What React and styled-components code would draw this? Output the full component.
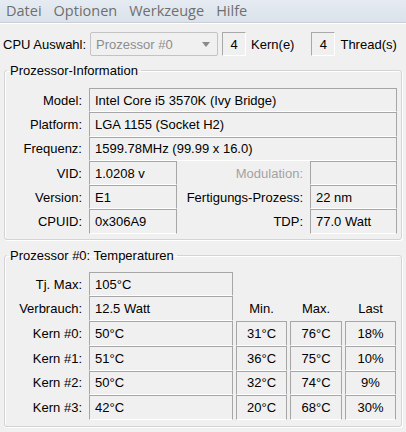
import React from 'react';
import styled, { createGlobalStyle } from 'styled-components';

const GlobalStyle = createGlobalStyle`
  html, body {
    margin: 0;
    padding: 0;
    background: #f0f0f0;
  }
  body {
    font-family: "Liberation Sans", Arial, sans-serif;
    font-size: 13px;
    color: #000;
  }
`;

const cores = [
  { name: 'Kern #0:', temp: '50°C', min: '31°C', max: '76°C', load: '18%' },
  { name: 'Kern #1:', temp: '51°C', min: '36°C', max: '75°C', load: '10%' },
  { name: 'Kern #2:', temp: '50°C', min: '32°C', max: '74°C', load: '9%' },
  { name: 'Kern #3:', temp: '42°C', min: '20°C', max: '68°C', load: '30%' },
];

function App() {
  return (
    <Window>
      <GlobalStyle />
      <MenuBar>
        <MenuItem>Datei</MenuItem>
        <MenuItem>Optionen</MenuItem>
        <MenuItem>Werkzeuge</MenuItem>
        <MenuItem>Hilfe</MenuItem>
      </MenuBar>

      <Toolbar>
        <span>CPU Auswahl:</span>
        <Combo>
          <span>Prozessor #0</span>
          <Arrow />
        </Combo>
        <CountBox>4</CountBox>
        <span>Kern(e)</span>
        <CountBox $gap>4</CountBox>
        <span>Thread(s)</span>
      </Toolbar>

      <Group>
        <Legend>Prozessor-Information</Legend>
        <InfoGrid>
          <Label>Model:</Label>
          <Field $span={3}>Intel Core i5 3570K (Ivy Bridge)</Field>
          <Label>Platform:</Label>
          <Field $span={3}>LGA 1155 (Socket H2)</Field>
          <Label>Frequenz:</Label>
          <Field $span={3}>1599.78MHz (99.99 x 16.0)</Field>

          <Label>VID:</Label>
          <Field>1.0208 v</Field>
          <Label $disabled>Modulation:</Label>
          <Field />

          <Label>Version:</Label>
          <Field>E1</Field>
          <Label>Fertigungs-Prozess:</Label>
          <Field>22 nm</Field>

          <Label>CPUID:</Label>
          <Field>0x306A9</Field>
          <Label>TDP:</Label>
          <Field>77.0 Watt</Field>
        </InfoGrid>
      </Group>

      <Group $second>
        <Legend>Prozessor #0: Temperaturen</Legend>
        <TempGrid>
          <Label>Tj. Max:</Label>
          <Field>105°C</Field>
          <Blank />

          <Label>Verbrauch:</Label>
          <Field>12.5 Watt</Field>
          <Head>Min.</Head>
          <Head>Max.</Head>
          <Head>Last</Head>

          {cores.map((c) => (
            <React.Fragment key={c.name}>
              <Label>{c.name}</Label>
              <Field>{c.temp}</Field>
              <Field $center>{c.min}</Field>
              <Field $center>{c.max}</Field>
              <Field $center>{c.load}</Field>
            </React.Fragment>
          ))}
        </TempGrid>
      </Group>
    </Window>
  );
}

export default App;

const Window = styled.div`
  width: 406px;
  height: 432px;
  overflow: hidden;
  background: #f0f0f0;
`;

const MenuBar = styled.div`
  display: flex;
  align-items: center;
  height: 22px;
  padding-left: 6px;
  gap: 12px;
  background: linear-gradient(#e6ebf2, #dbe2ea);
  border-bottom: 1px solid #c9cfd7;
  box-shadow: 0 1px 0 #ffffff;
`;

const MenuItem = styled.span`
  font-family: "Open Sans", "Liberation Sans", sans-serif;
  font-size: 14.5px;
  color: #6f6f6f;
  line-height: 20px;
`;

const Toolbar = styled.div`
  display: flex;
  align-items: center;
  height: 24px;
  margin-top: 9px;
  padding-left: 3px;
`;

const Combo = styled.div`
  display: flex;
  align-items: center;
  justify-content: space-between;
  box-sizing: border-box;
  width: 128px;
  height: 24px;
  margin-left: 4px;
  padding: 0 7px 0 5px;
  border: 1px solid #c3c3c3;
  border-radius: 2px;
  color: #8d8d8d;
  background: #f0f0f0;
`;

const Arrow = styled.span`
  width: 0;
  height: 0;
  border-left: 4.5px solid transparent;
  border-right: 4.5px solid transparent;
  border-top: 5px solid #8a8a8a;
`;

const CountBox = styled.div`
  box-sizing: border-box;
  width: 24px;
  height: 24px;
  margin-left: ${(p) => (p.$gap ? '17px' : '4px')};
  margin-right: 5px;
  display: flex;
  align-items: center;
  justify-content: center;
  border: 1px solid #a9a9a9;
  border-right-color: #ffffff;
  border-bottom-color: #ffffff;
`;

const Group = styled.fieldset`
  margin: ${(p) => (p.$second ? '8px 4px 0 4px' : '7px 4px 0 4px')};
  padding: ${(p) => (p.$second ? '9px 4px 6px 0' : '10px 4px 5px 0')};
  border: 1px solid #d3d3d3;
  border-radius: 3px;
  box-shadow: inset 1px 1px 0 #ffffff, 1px 1px 0 #ffffff;
  min-width: 0;
`;

const Legend = styled.legend`
  margin-left: 2px;
  padding: 0 3px;
  line-height: 15px;
`;

const InfoGrid = styled.div`
  display: grid;
  grid-template-columns: 81px 88px 1fr 87px;
  grid-auto-rows: 24.3px;
  column-gap: 3px;
`;

const TempGrid = styled.div`
  display: grid;
  grid-template-columns: 81px 144px 51px 52px 51px;
  grid-auto-rows: 24.7px;
  column-gap: 3px;
`;

const Label = styled.div`
  display: flex;
  align-items: center;
  justify-content: flex-end;
  padding-right: 4px;
  white-space: nowrap;
  color: ${(p) => (p.$disabled ? '#a3a3a3' : '#000')};
`;

const Field = styled.div`
  grid-column: span ${(p) => p.$span || 1};
  display: flex;
  align-items: center;
  justify-content: ${(p) => (p.$center ? 'center' : 'flex-start')};
  box-sizing: border-box;
  padding-left: ${(p) => (p.$center ? '0' : '5px')};
  border: 1px solid #a6a6a6;
  border-bottom-color: #ffffff;
  white-space: nowrap;
`;

const Head = styled.div`
  display: flex;
  align-items: center;
  justify-content: center;
`;

const Blank = styled.div`
  grid-column: span 3;
`;
